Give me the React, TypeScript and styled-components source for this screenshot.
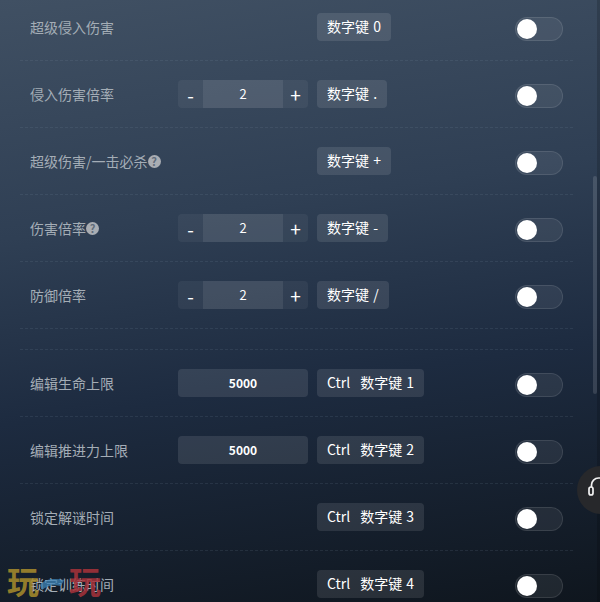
import * as React from "react";
import styled, { createGlobalStyle } from "styled-components";

const GlobalStyle = createGlobalStyle`
  html, body {
    margin: 0;
    padding: 0;
    height: 100%;
    overflow: hidden;
    font-family: "Noto Sans CJK SC", "Noto Sans", sans-serif;
  }
`;

const Page = styled.div`
  position: relative;
  width: 600px;
  height: 602px;
  overflow: hidden;
  background: linear-gradient(172deg, #405063 0%, #2f3f54 35%, #1d2b40 62%, #0f161e 100%);
`;

const List = styled.div`
  width: 553px;
  margin: -6px 0 0 20px;
`;

const Row = styled.div`
  display: flex;
  align-items: center;
  height: 66px;
  padding: 0 10px;
  border-bottom: 1px dashed rgba(130, 150, 170, 0.15);
`;

const Spacer = styled.div`
  height: 20px;
  border-bottom: 1px dashed rgba(130, 150, 170, 0.15);
`;

const Label = styled.div`
  display: flex;
  align-items: center;
  width: 148px;
  font-size: 14px;
  color: #a4adb6;
`;

const Help = styled.span`
  display: flex;
  align-items: center;
  justify-content: center;
  width: 13px;
  height: 13px;
  border-radius: 50%;
  background: #a9adb3;
  color: #5f6b7a;
  font-size: 11px;
  font-weight: 700;
  line-height: 1;
`;

const Control = styled.div`
  box-sizing: border-box;
  width: 130px;
  height: 28px;
  margin-right: 9px;
`;

const Stepper = styled(Control)`
  display: flex;
  border-radius: 4px;
  overflow: hidden;
  background: rgba(255, 255, 255, 0.05);
  color: #fff;
`;

const StepButton = styled.div`
  width: 25px;
  display: flex;
  align-items: center;
  justify-content: center;
  font-size: 19px;
`;

const StepValue = styled.div`
  width: 80px;
  display: flex;
  align-items: center;
  justify-content: center;
  padding-bottom: 2px;
  font-size: 13px;
  background: rgba(255, 255, 255, 0.08);
`;

const ValueInput = styled(Control)`
  display: flex;
  align-items: center;
  justify-content: center;
  padding-bottom: 1px;
  border-radius: 4px;
  background: rgba(255, 255, 255, 0.1);
  color: #fff;
  font-size: 12px;
  font-weight: 700;
`;

const KeyChip = styled.div`
  box-sizing: border-box;
  display: flex;
  align-items: center;
  gap: 10px;
  height: 28px;
  padding: 0 10px 2px;
  border-radius: 4px;
  background: rgba(255, 255, 255, 0.1);
  color: #fff;
  font-size: 14px;
  word-spacing: 1px;
`;

const KeyColumn = styled.div`
  flex: 1;
  display: flex;
`;

const Toggle = styled.div`
  box-sizing: border-box;
  display: flex;
  align-items: center;
  width: 48px;
  height: 24px;
  margin-top: 4px;
  padding-left: 1px;
  border-radius: 12px;
  border: 1px solid rgba(255, 255, 255, 0.1);
  background: rgba(255, 255, 255, 0.07);
`;

const Knob = styled.div`
  width: 20px;
  height: 20px;
  border-radius: 50%;
  background: #fff;
`;

const ScrollTrack = styled.div`
  position: absolute;
  top: 0;
  right: 0;
  width: 3px;
  height: 100%;
  background: rgba(0, 0, 0, 0.16);
`;

const Scrollbar = styled.div`
  position: absolute;
  top: 176px;
  left: 593px;
  width: 4px;
  height: 218px;
  border-radius: 2px;
  background: rgba(255, 255, 255, 0.13);
`;

const Floating = styled.div`
  position: absolute;
  top: 466px;
  left: 577px;
  width: 48px;
  height: 48px;
  border-radius: 50%;
  background: #27282b;
  display: flex;
  align-items: center;
  padding: 0 0 6px 11px;
  box-sizing: border-box;
`;

const Watermark = styled.div<{ $color: string; $left: number }>`
  position: absolute;
  top: 561px;
  left: ${(p) => p.$left}px;
  color: ${(p) => p.$color};
  font-family: "Noto Sans CJK SC", sans-serif;
  font-size: 32px;
  font-weight: 700;
  line-height: 38px;
  opacity: 0.85;
`;

const WaterSwoosh = styled.svg`
  position: absolute;
  top: 577px;
  left: 39px;
`;

type RowData = {
  label: string;
  help?: boolean;
  step?: boolean;
  input?: boolean;
  ctrl?: boolean;
  key: string;
};

const rows: RowData[] = [
  { label: "超级侵入伤害", key: "数字键 0" },
  { label: "侵入伤害倍率", step: true, key: "数字键 ." },
  { label: "超级伤害/一击必杀", help: true, key: "数字键 +" },
  { label: "伤害倍率", help: true, step: true, key: "数字键 -" },
  { label: "防御倍率", step: true, key: "数字键 /" },
];

const rows2: RowData[] = [
  { label: "编辑生命上限", input: true, ctrl: true, key: "数字键 1" },
  { label: "编辑推进力上限", input: true, ctrl: true, key: "数字键 2" },
  { label: "锁定解谜时间", ctrl: true, key: "数字键 3" },
  { label: "锁定训练时间", ctrl: true, key: "数字键 4" },
];

const CheatRow = ({ row }: { row: RowData }) => (
  <Row>
    <Label>
      {row.label}
      {row.help && <Help>?</Help>}
    </Label>
    {row.step && (
      <Stepper>
        <StepButton>-</StepButton>
        <StepValue>2</StepValue>
        <StepButton>+</StepButton>
      </Stepper>
    )}
    {row.input && <ValueInput>5000</ValueInput>}
    {!row.step && !row.input && <Control />}
    <KeyColumn>
      <KeyChip>
        {row.ctrl && <span>Ctrl</span>}
        <span>{row.key}</span>
      </KeyChip>
    </KeyColumn>
    <Toggle>
      <Knob />
    </Toggle>
  </Row>
);

const App = () => {
  return (
    <Page>
      <GlobalStyle />
      <Watermark $color="#a98d2c" $left={7}>玩</Watermark>
      <Watermark $color="#a8323a" $left={69}>玩</Watermark>
      <WaterSwoosh width="26" height="14" viewBox="0 0 26 14">
        <path d="M1 8C6 2 14 1 25 3L22 9C14 7 8 9 3 13Z" fill="#3f86b8" opacity="0.75" />
      </WaterSwoosh>
      <List>
        {rows.map((r) => (
          <CheatRow key={r.label} row={r} />
        ))}
        <Spacer />
        {rows2.map((r) => (
          <CheatRow key={r.label} row={r} />
        ))}
      </List>
      <ScrollTrack />
      <Scrollbar />
      <Floating>
        <svg width="16" height="20" viewBox="0 0 16 20" fill="none" stroke="#f2f2f2" strokeWidth="1.7">
          <path d="M3.5 10V8a7 7 0 0 1 7-7h5" />
          <rect x="1" y="10" width="4" height="8" rx="2" />
        </svg>
      </Floating>
    </Page>
  );
};

export default App;
